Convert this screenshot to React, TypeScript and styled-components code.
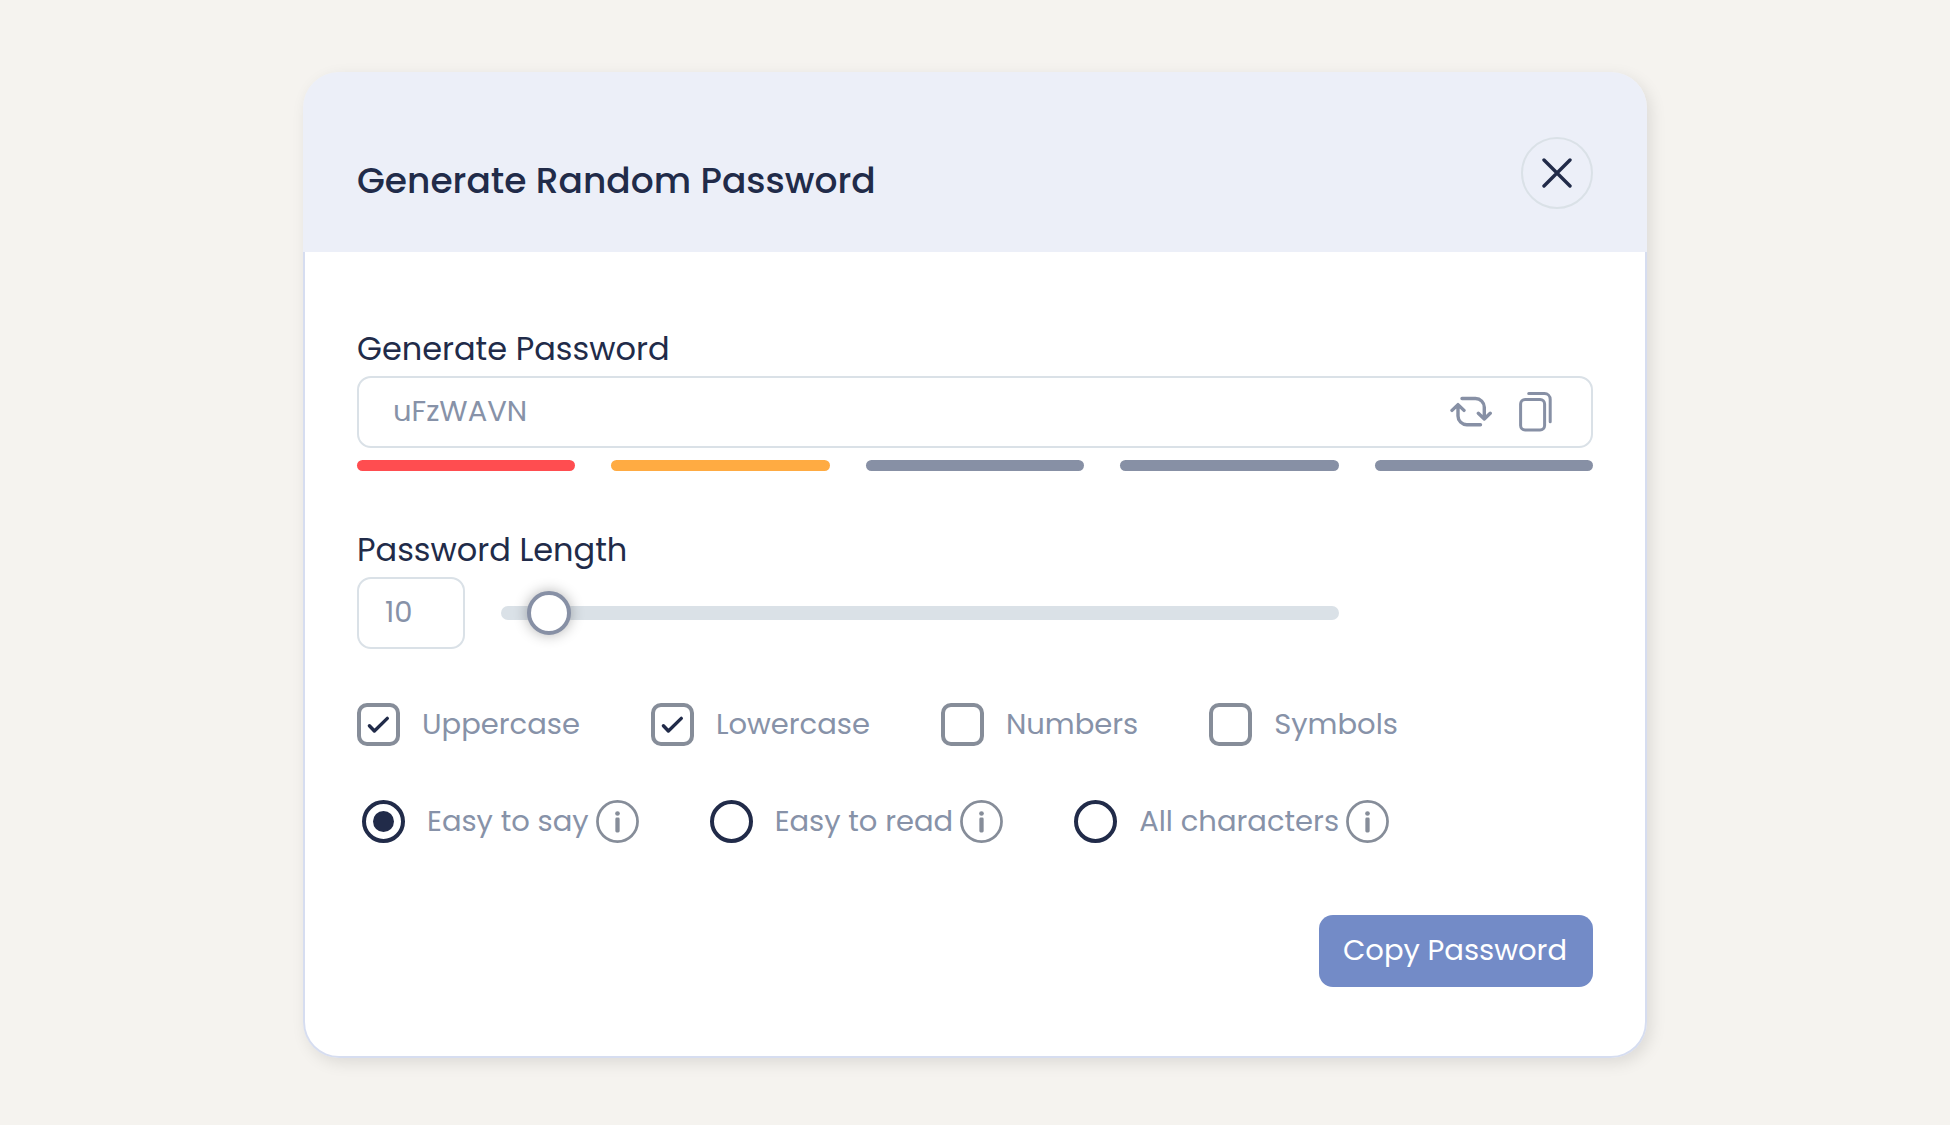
import React, { useState } from "react";
import styled, { createGlobalStyle } from "styled-components";

const color = {
  page: "#f5f3ef",
  header: "#eceff8",
  border: "#d6ddf0",
  line: "#dae1e7",
  ink: "#212b49",
  muted: "#8792a8",
  bar: "#8790a5",
  outline: "#868d99",
  primary: "#738bc7",
};

const GlobalStyle = createGlobalStyle`
  *, *::before, *::after { box-sizing: border-box; }
  body {
    margin: 0;
    background: ${color.page};
    color: ${color.ink};
    font-family: Poppins, Inter, sans-serif;
    font-size: 29px;
    line-height: 40px;
  }
  button, input { font: inherit; color: inherit; }
`;

const Page = styled.main`
  min-height: 100vh;
  padding: 72px 32px 64px;
`;

const Dialog = styled.section`
  max-width: 1344px;
  margin: 0 auto;
  border-radius: 36px;
  box-shadow: 4px 5px 16px rgba(0, 0, 0, 0.1);
`;

const Header = styled.header`
  display: flex;
  justify-content: space-between;
  align-items: flex-end;
  padding: 65px 54px 43px;
  border-radius: 36px 36px 0 0;
  background: ${color.header};
`;

const Title = styled.h1`
  margin: 0;
  font-size: 36px;
  font-weight: 500;
  line-height: 56px;
`;

const CloseButton = styled.button`
  display: grid;
  place-items: center;
  width: 72px;
  height: 72px;
  padding: 0;
  border: 2px solid ${color.line};
  border-radius: 50%;
  background: transparent;
  cursor: pointer;
`;

const Body = styled.form`
  display: flex;
  flex-direction: column;
  gap: 54px;
  padding: 72px 52px 69px;
  border: 2px solid ${color.border};
  border-top: 0;
  border-radius: 0 0 36px 36px;
  background: #fff;
`;

const Field = styled.div`
  display: flex;
  flex-direction: column;
`;

const FieldLabel = styled.label`
  margin-bottom: 2px;
  font-size: 32px;
  line-height: 50px;
`;

const InputFrame = styled.div`
  display: flex;
  align-items: center;
  gap: 27px;
  height: 72px;
  padding: 0 39px 0 0;
  border: 2px solid ${color.line};
  border-radius: 14px;
`;

const PasswordInput = styled.input`
  flex: 1;
  min-width: 0;
  height: 100%;
  padding: 0 0 2px 34px;
  border: 0;
  border-radius: 12px;
  background: transparent;
  color: ${color.muted};
`;

const IconButton = styled.button`
  display: flex;
  padding: 0;
  border: 0;
  background: none;
  color: ${color.bar};
  cursor: pointer;
`;

const Meter = styled.div`
  display: grid;
  grid-template-columns: repeat(5, 1fr);
  gap: 36px;
  margin-top: 12px;
`;

const MeterBar = styled.span<{ $fill: string }>`
  height: 11px;
  border-radius: 6px;
  background: ${(p) => p.$fill};
`;

const LengthRow = styled.div`
  display: grid;
  grid-template-columns: 108px 1fr calc((100% - 144px) / 5);
  align-items: center;
  gap: 36px;
`;

const LengthInput = styled.input`
  width: 100%;
  height: 72px;
  padding: 0 0 2px 26px;
  border: 2px solid ${color.line};
  border-radius: 14px;
  background: transparent;
  color: ${color.muted};
`;

const Slider = styled.input`
  appearance: none;
  width: 100%;
  height: 14px;
  margin: 0;
  border-radius: 7px;
  background: ${color.line};
  cursor: pointer;

  &::-webkit-slider-thumb {
    appearance: none;
    width: 44px;
    height: 44px;
    border: 4px solid ${color.bar};
    border-radius: 50%;
    background: #fff;
    box-shadow: 0 0 14px rgba(0, 0, 0, 0.3);
  }
`;

const Options = styled.div<{ $inset?: boolean }>`
  display: flex;
  flex-wrap: wrap;
  gap: 24px 71px;
  padding-left: ${(p) => (p.$inset ? "5px" : "0")};
`;

const Option = styled.div`
  display: flex;
  align-items: center;
  gap: 7px;
`;

const OptionLabel = styled.label`
  display: flex;
  align-items: center;
  gap: 22px;
  color: ${color.muted};
  cursor: pointer;
`;

const OptionText = styled.span`
  padding-bottom: 2px;
`;

const Stack = styled.span`
  display: grid;
  place-items: center;
  width: 43px;
  height: 43px;

  > * { grid-area: 1 / 1; }
  svg { pointer-events: none; visibility: hidden; }
  input:checked + svg { visibility: visible; }
`;

const Check = styled.input`
  appearance: none;
  width: 43px;
  height: 43px;
  margin: 0;
  border: 4px solid ${color.outline};
  border-radius: 10px;
`;

const Radio = styled.input`
  appearance: none;
  display: grid;
  place-items: center;
  width: 43px;
  height: 43px;
  margin: 0;
  border: 4px solid ${color.ink};
  border-radius: 50%;

  &:checked::after {
    content: "";
    width: 21px;
    height: 21px;
    border-radius: 50%;
    background: ${color.ink};
  }
`;

const InfoButton = styled(IconButton)`
  color: ${color.outline};
`;

const Actions = styled.div`
  display: flex;
  justify-content: flex-end;
  padding-top: 18px;
`;

const CopyButton = styled.button`
  height: 72px;
  padding: 0 26px 2px 24px;
  border: 0;
  border-radius: 14px;
  background: ${color.primary};
  color: #fff;
  cursor: pointer;
`;

const CloseIcon = () => (
  <svg width="30" height="30" viewBox="0 0 30 30" fill="none" stroke={color.ink} strokeWidth="3.4" strokeLinecap="round">
    <path d="M2 2 28 28M28 2 2 28" />
  </svg>
);

const RefreshIcon = () => (
  <svg width="42" height="32" viewBox="0 0 42 32" fill="none" stroke="currentColor" strokeWidth="3.4" strokeLinecap="round" strokeLinejoin="round">
    <path d="M12 2.5H25.5A8.8 8.8 0 0 1 34.3 11.3V23M28.3 17.3 34.3 23 40.2 17.3" />
    <path d="M30.5 28.7H16.8A8.8 8.8 0 0 1 8 19.9V8.8M2 14.4 8 8.6 14 14.4" />
  </svg>
);

const CopyIcon = () => (
  <svg width="33" height="40" viewBox="0 0 33 40" fill="none" stroke="currentColor" strokeWidth="3" strokeLinecap="round">
    <rect x="1.6" y="7.5" width="24" height="30.6" rx="4.5" />
    <path d="M9.7 1.5H25.5A5.8 5.8 0 0 1 31.2 7.3V29.8" />
  </svg>
);

const CheckIcon = () => (
  <svg width="43" height="43" viewBox="0 0 43 43" fill="none" stroke={color.ink} strokeWidth="3.4" strokeLinecap="round" strokeLinejoin="round">
    <path d="M12.4 22.8 17.4 28 30.3 15.4" />
  </svg>
);

const InfoIcon = () => (
  <svg width="43" height="43" viewBox="0 0 44 44" fill="currentColor">
    <circle cx="22" cy="22" r="20.5" fill="none" stroke="currentColor" strokeWidth="2.8" />
    <circle cx="22" cy="13.8" r="2.4" />
    <rect x="19.8" y="18" width="4.4" height="15.2" rx="1.4" />
  </svg>
);

const strength = ["#ff4d50", "#ffab42", color.bar, color.bar, color.bar];
const characterSets = ["Uppercase", "Lowercase", "Numbers", "Symbols"];
const modes = ["Easy to say", "Easy to read", "All characters"];

export default function App() {
  const [password, setPassword] = useState("uFzWAVN");
  const [length, setLength] = useState(10);
  const [sets, setSets] = useState(["Uppercase", "Lowercase"]);
  const [mode, setMode] = useState(modes[0]);

  const regenerate = () => {
    const letters = "ABCDEFGHIJKLMNOPQRSTUVWXYZabcdefghijklmnopqrstuvwxyz";
    setPassword(Array.from({ length }, () => letters[Math.floor(Math.random() * letters.length)]).join(""));
  };
  const copy = () => navigator.clipboard?.writeText(password);
  const toggle = (name: string) =>
    setSets((now) => (now.includes(name) ? now.filter((n) => n !== name) : [...now, name]));

  return (
    <>
      <GlobalStyle />
      <Page>
        <Dialog role="dialog" aria-labelledby="title">
          <Header>
            <Title id="title">Generate Random Password</Title>
            <CloseButton type="button" aria-label="Close">
              <CloseIcon />
            </CloseButton>
          </Header>
          <Body onSubmit={(e) => e.preventDefault()}>
            <Field>
              <FieldLabel htmlFor="password">Generate Password</FieldLabel>
              <InputFrame>
                <PasswordInput id="password" value={password} onChange={(e) => setPassword(e.target.value)} />
                <IconButton type="button" aria-label="Regenerate" onClick={regenerate}>
                  <RefreshIcon />
                </IconButton>
                <IconButton type="button" aria-label="Copy" onClick={copy}>
                  <CopyIcon />
                </IconButton>
              </InputFrame>
              <Meter>
                {strength.map((fill, i) => (
                  <MeterBar key={i} $fill={fill} />
                ))}
              </Meter>
            </Field>

            <Field>
              <FieldLabel htmlFor="length">Password Length</FieldLabel>
              <LengthRow>
                <LengthInput
                  id="length"
                  inputMode="numeric"
                  value={length}
                  onChange={(e) => setLength(Number(e.target.value) || 0)}
                />
                <Slider
                  type="range"
                  aria-label="Password Length"
                  min={8}
                  max={68}
                  value={length}
                  onChange={(e) => setLength(Number(e.target.value))}
                />
              </LengthRow>
            </Field>

            <Options>
              {characterSets.map((name) => (
                <OptionLabel key={name}>
                  <Stack>
                    <Check type="checkbox" checked={sets.includes(name)} onChange={() => toggle(name)} />
                    <CheckIcon />
                  </Stack>
                  <OptionText>{name}</OptionText>
                </OptionLabel>
              ))}
            </Options>

            <Options $inset>
              {modes.map((name) => (
                <Option key={name}>
                  <OptionLabel>
                    <Radio type="radio" name="mode" checked={mode === name} onChange={() => setMode(name)} />
                    <OptionText>{name}</OptionText>
                  </OptionLabel>
                  <InfoButton type="button" aria-label={`About ${name}`}>
                    <InfoIcon />
                  </InfoButton>
                </Option>
              ))}
            </Options>

            <Actions>
              <CopyButton type="button" onClick={copy}>
                Copy Password
              </CopyButton>
            </Actions>
          </Body>
        </Dialog>
      </Page>
    </>
  );
}
